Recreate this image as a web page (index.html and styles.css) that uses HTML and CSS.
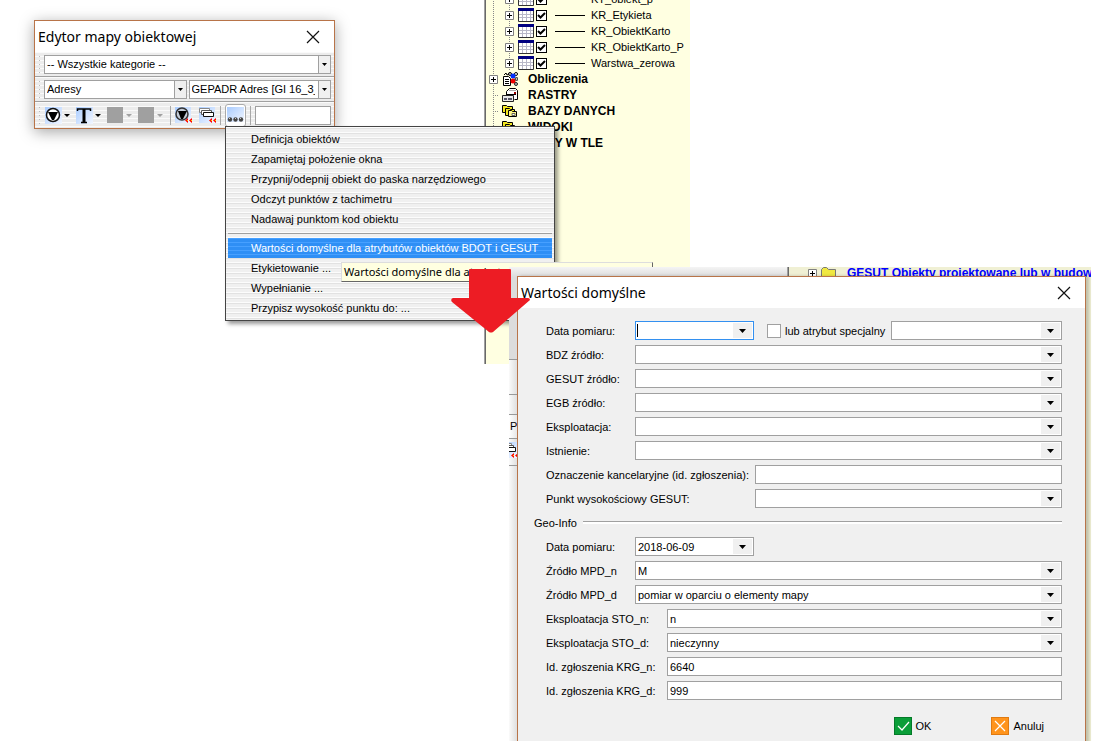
FILE: index.html
```html
<!DOCTYPE html>
<html lang="pl">
<head>
<meta charset="utf-8">
<title>Edytor mapy obiektowej</title>
<link rel="stylesheet" href="styles.css">
</head>
<body>
<svg class="defs" aria-hidden="true">
  <defs>
    <linearGradient id="sky" x1="0" y1="0" x2="1" y2="1"><stop offset="0" stop-color="#a9ccff"/><stop offset="1" stop-color="#f2f6ff"/></linearGradient>
    <symbol id="plus" viewBox="0 0 9 9"><path d="M.5.5h8v8h-8z" fill="#fff" stroke="#808080"/><path d="M2 4.500h5M4.500 2v5" stroke="#000"/></symbol>
    <symbol id="table" viewBox="0 0 16 14"><path d="M.5.5h15v13H.5z" fill="#fff" stroke="#333"/><path d="M0 0h16v3H0z" fill="#000080"/><path d="M1 6.500h14M1 9.500h14M4.500 3v10M8.500 3v10M12.500 3v10" stroke="#b8b8c8"/></symbol>
    <symbol id="calc" viewBox="0 0 16 16"><path d="M1.500 5.500h5l2 2v7h-7z" fill="#fff" stroke="#000"/><path d="M3 8.500h4M3 10.500h4M3 12.500h4" stroke="#000"/><path d="M2 4l2-2 1 2 2-1" stroke="#000" fill="none"/><circle cx="8" cy="3" r="1.500" fill="#ccc" stroke="#000"/><circle cx="14" cy="3" r="1.500" fill="#fff" stroke="#000"/><circle cx="11" cy="5" r="2.500" fill="#0030ff"/><circle cx="11" cy="10" r="2.500" fill="#f00000"/><circle cx="14.500" cy="8" r="1.500" fill="#bbb" stroke="#222"/><circle cx="14" cy="13" r="1.500" fill="#bbb" stroke="#222"/></symbol>
    <symbol id="print" viewBox="0 0 16 16"><path d="M4.500 7.500v-3l3-3h6l2 2v9h-3" fill="#fff" stroke="#000"/><path d="M7 3.500h7" stroke="#aaa"/><path d="M4 7.500h10" stroke="#000"/><path d="M12 5h2v2h-2z" fill="#900"/><path d="M.5 8.500h11v6H.5z" fill="#e8e8e8" stroke="#222"/><path d="M2 11h3v2H2zM6 11h4v2H6z" fill="#556"/></symbol>
    <symbol id="layers" viewBox="0 0 16 14"><g fill="#f4e820" stroke="#000"><path d="M.5 1.500h4l1 1h5v6H.5z"/><path d="M3.500 4.500h4l1 1h4v6h-9z"/><path d="M6.500 6.500h3l1 1h4v5h-8z" fill="#fff88a"/></g><path d="M10 9.500h3v2h-3z" fill="#fff" stroke="#665"/></symbol>
    <symbol id="folder" viewBox="0 0 15 12"><path d="M.5 2.500l2-2h3l2 2h7v9H.5z" fill="#f0e840" stroke="#777"/></symbol>
    <symbol id="close" viewBox="0 0 14 14"><path d="M1 1l12 12M13 1L1 13" stroke="#111" fill="none" stroke-width="1.200"/></symbol>
    <symbol id="obj" viewBox="0 0 17 17"><path d="M0 0h17v17H0z" fill="url(#sky)"/><circle cx="8" cy="8" r="6.500" fill="#fff" stroke="#111" stroke-width="1.500"/><path d="M3 5h10l-4 8H7z" fill="#000"/></symbol>
    <symbol id="text" viewBox="0 0 17 17"><path d="M0 0h17v17H0z" fill="url(#sky)"/><path d="M1.500 4V2h13v2M5 15.500h6" stroke="#000" stroke-width="1.500" fill="none"/><path d="M8 2v13" stroke="#000" stroke-width="3"/></symbol>
    <symbol id="off" viewBox="0 0 17 17"><path d="M0 0h16v16H0z" fill="#a0a0a0"/></symbol>
    <symbol id="back" viewBox="0 0 7 5"><path d="M3 0v5L0 2.500zM7 0v5L4 2.500z" fill="#f00"/><path d="M2 2h1v1H2zM6 2h1v1H6z" fill="#ffd000"/></symbol>
    <symbol id="objback" viewBox="0 0 17 17"><path d="M0 0h16v16H0z" fill="url(#sky)"/><circle cx="7" cy="7" r="6" fill="#c4ccd8" stroke="#333" stroke-width="1.500"/><path d="M3 4h9l-4 8H6z" fill="#000"/><use href="#back" x="10" y="11" width="7" height="5"/></symbol>
    <symbol id="winback" viewBox="0 0 17 17"><path d="M0 0h16v16H0z" fill="url(#sky)"/><g fill="#fff"><path d="M.5 1.500h10v4H.5z" stroke="#888"/><path d="M2.500 3.500h10v4h-10z" stroke="#555"/><path d="M4.500 5.500h10v4h-10z" stroke="#111"/></g><use href="#back" x="10" y="11" width="7" height="5"/></symbol>
    <symbol id="dots" viewBox="0 0 17 17"><path d="M0 0h17v15H0z" fill="url(#sky)"/><g fill="#444"><circle cx="3" cy="12.500" r="2.200"/><circle cx="8.500" cy="12.500" r="2.200"/><circle cx="14" cy="12.500" r="2.200"/></g><path d="M2 11h1v1H2zM8 11h1v1H8zM13 11h1v1h-1z" fill="#ccc"/></symbol>
  </defs>
</svg>

<main class="desktop">
  <section class="tree tree-main" aria-label="Warstwy">
    <ul class="tree-list">
      <li class="leaf"><svg class="plus"><use href="#plus"/></svg><svg class="tbl"><use href="#table"/></svg><label><input type="checkbox" checked><i></i>KT_obiekt_p</label></li>
      <li class="leaf"><svg class="plus"><use href="#plus"/></svg><svg class="tbl"><use href="#table"/></svg><label><input type="checkbox" checked><i></i>KR_Etykieta</label></li>
      <li class="leaf"><svg class="plus"><use href="#plus"/></svg><svg class="tbl"><use href="#table"/></svg><label><input type="checkbox" checked><i></i>KR_ObiektKarto</label></li>
      <li class="leaf"><svg class="plus"><use href="#plus"/></svg><svg class="tbl"><use href="#table"/></svg><label><input type="checkbox" checked><i></i>KR_ObiektKarto_P</label></li>
      <li class="leaf"><svg class="plus"><use href="#plus"/></svg><svg class="tbl"><use href="#table"/></svg><label><input type="checkbox" checked><i></i>Warstwa_zerowa</label></li>
      <li class="branch"><svg class="plus"><use href="#plus"/></svg><svg class="ico"><use href="#calc"/></svg>Obliczenia</li>
      <li class="branch"><span class="plus stub"></span><svg class="ico"><use href="#print"/></svg>RASTRY</li>
      <li class="branch"><span class="plus stub"></span><svg class="ico"><use href="#layers"/></svg>BAZY DANYCH</li>
      <li class="branch"><span class="plus stub"></span><svg class="ico"><use href="#layers"/></svg>WIDOKI</li>
      <li class="branch"><span class="plus stub"></span><svg class="ico"><use href="#layers"/></svg>MAPY W TLE</li>
    </ul>
  </section>

  <section class="window editor" aria-label="Edytor mapy obiektowej">
    <header class="titlebar"><h1>Edytor mapy obiektowej</h1><button class="close" aria-label="Zamknij"><svg><use href="#close"/></svg></button></header>
    <div class="bar"><span class="grip"></span><select class="combo flat grow" aria-label="Kategoria"><option>-- Wszystkie kategorie --</option></select></div>
    <div class="bar"><span class="grip"></span><select class="combo flat grow" aria-label="Grupa"><option>Adresy</option></select><select class="combo flat grow" aria-label="Obiekt"><option>GEPADR Adres [GI 16_3_1]</option></select></div>
    <div class="bar tools"><span class="grip"></span>
      <button class="tool drop" aria-label="Obiekt"><svg><use href="#obj"/></svg></button>
      <button class="tool drop" aria-label="Tekst"><svg><use href="#text"/></svg></button>
      <button class="tool drop" aria-label="Linia" disabled><svg><use href="#off"/></svg></button>
      <button class="tool drop" aria-label="Obszar" disabled><svg><use href="#off"/></svg></button>
      <span class="sep"></span>
      <button class="tool" aria-label="Poprzedni obiekt"><svg><use href="#objback"/></svg></button>
      <button class="tool" aria-label="Poprzednie okno"><svg><use href="#winback"/></svg></button>
      <span class="sep"></span>
      <button class="tool more" aria-label="Więcej"><svg><use href="#dots"/></svg></button>
      <span class="sep"></span>
      <input class="field grow" type="text" aria-label="Szukaj">
    </div>
  </section>

  <nav class="menu" aria-label="Więcej">
    <button>Definicja obiektów</button>
    <button>Zapamiętaj położenie okna</button>
    <button>Przypnij/odepnij obiekt do paska narzędziowego</button>
    <button>Odczyt punktów z tachimetru</button>
    <button>Nadawaj punktom kod obiektu</button>
    <hr>
    <button class="active">Wartości domyślne dla atrybutów obiektów BDOT i GESUT</button>
    <button>Etykietowanie ...</button>
    <button>Wypełnianie ...</button>
    <button>Przypisz wysokość punktu do: ...</button>
  </nav>
  <div class="tooltip" role="tooltip">Wartości domyślne dla atrybut</div>

  <div class="backdrop">
    <div class="behind">
      <div class="gap"></div>
      <div class="slot slot-title"></div>
      <div class="slot"></div>
      <div class="slot slot-text">P</div>
      <div class="slot slot-icon"><svg viewBox="8 0 9 17"><use href="#winback" width="17" height="17"/></svg></div>
    </div>
    <div class="tree tree-back">
      <ul class="tree-list"><li class="project"><svg class="plus"><use href="#plus"/></svg><svg class="fold"><use href="#folder"/></svg>GESUT Obiekty projektowane lub w budow</li></ul>
    </div>
  </div>

  <section class="window dialog" aria-label="Wartości domyślne">
    <header class="titlebar"><h2>Wartości domyślne</h2><button class="close" aria-label="Zamknij"><svg><use href="#close"/></svg></button></header>
    <form class="form">
      <div class="row"><label for="d1">Data pomiaru:</label><select id="d1" class="combo date focus"><option></option></select><span class="caret"></span>
        <label class="special"><input type="checkbox">lub atrybut specjalny</label><select class="combo grow" aria-label="Atrybut specjalny"><option></option></select></div>
      <div class="row"><label for="bdz">BDZ źródło:</label><select id="bdz" class="combo grow"><option></option></select></div>
      <div class="row"><label for="ges">GESUT źródło:</label><select id="ges" class="combo grow"><option></option></select></div>
      <div class="row"><label for="egb">EGB źródło:</label><select id="egb" class="combo grow"><option></option></select></div>
      <div class="row"><label for="eks">Eksploatacja:</label><select id="eks" class="combo grow"><option></option></select></div>
      <div class="row"><label for="ist">Istnienie:</label><select id="ist" class="combo grow"><option></option></select></div>
      <div class="row wide"><label for="ozn">Oznaczenie kancelaryjne (id. zgłoszenia):</label><input id="ozn" class="field grow" type="text"></div>
      <div class="row wide"><label for="pkt">Punkt wysokościowy GESUT:</label><select id="pkt" class="combo grow"><option></option></select></div>
      <h3 class="group">Geo-Info</h3>
      <div class="row"><label for="d2">Data pomiaru:</label><select id="d2" class="combo date"><option>2018-06-09</option></select></div>
      <div class="row"><label for="mn">Źródło MPD_n</label><select id="mn" class="combo grow"><option>M</option></select></div>
      <div class="row"><label for="md">Źródło MPD_d</label><select id="md" class="combo grow"><option>pomiar w oparciu o elementy mapy</option></select></div>
      <div class="row mid"><label for="sn">Eksploatacja STO_n:</label><select id="sn" class="combo grow"><option>n</option></select></div>
      <div class="row mid"><label for="sd">Eksploatacja STO_d:</label><select id="sd" class="combo grow"><option>nieczynny</option></select></div>
      <div class="row mid"><label for="kn">Id. zgłoszenia KRG_n:</label><input id="kn" class="field grow" type="text" value="6640"></div>
      <div class="row mid"><label for="kd">Id. zgłoszenia KRG_d:</label><input id="kd" class="field grow" type="text" value="999"></div>
      <footer class="actions">
        <button type="button"><svg viewBox="0 0 18 18"><path d="M0 0h18v18H0z" fill="#047a28"/><path d="M1 1h16v16H1z" fill="#0a9e38"/><path d="M4 9l4 4 7-8" fill="none" stroke="#fff" stroke-width="1.200"/></svg>OK</button>
        <button type="button"><svg viewBox="0 0 18 18"><path d="M0 0h18v18H0z" fill="#e07a10"/><path d="M1 1h16v16H1z" fill="#ff941c"/><path d="M4 4l10 10M14 4L4 14" fill="none" stroke="#fff" stroke-width="1.200"/></svg>Anuluj</button>
      </footer>
    </form>
  </section>

  <svg class="arrow" viewBox="0 0 79 64" aria-hidden="true"><path d="M19 0h22q1 0 1 0h17q1 0 1 1v28h17q2 0 2 2L42 63q-2 1-4 0L1 33q-2-3 1-4h16V1q0-1 1-1z" fill="#ed1c24"/></svg>
</main>
</body>
</html>
```
FILE: styles.css
```css
* { box-sizing: border-box; }

body {
  margin: 0;
  background: #fff;
  color: #000;
  font: 11px/16px "Liberation Sans", Arial, sans-serif;
}

button, input, select { font: inherit; color: inherit; margin: 0; }
button { border: 0; padding: 0; background: none; }
svg { display: block; flex: none; }
.defs { position: absolute; width: 0; height: 0; }
.grow { flex: 1; min-width: 0; }

.desktop { position: relative; min-height: 100vh; overflow: hidden; }

/* Layer tree */
.tree { background: #ffffe1; border-left: 1px solid #a0a0a0; box-shadow: inset 1px 0 #696969; overflow: hidden; }
.tree-main { position: absolute; left: 484px; top: 0; width: 206px; height: 364px; }
.tree-list { list-style: none; margin: -9px 0 0; padding: 0 0 0 4px; }
.tree-list li { display: flex; align-items: center; height: 16px; white-space: nowrap; }
.leaf {
  padding-left: 16px;
  background:
    repeating-linear-gradient(#888 0 1px, transparent 1px 2px) 4px 0 / 1px 100% no-repeat,
    repeating-linear-gradient(#888 0 1px, transparent 1px 2px) 20px 0 / 1px 100% no-repeat;
}
.branch {
  font-size: 12px;
  font-weight: bold;
  background: repeating-linear-gradient(#888 0 1px, transparent 1px 2px) 4px 0 / 1px 100% no-repeat;
}
.plus { width: 9px; height: 9px; }
.stub { background: repeating-linear-gradient(90deg, #888 0 1px, transparent 1px 2px) 4px 4px / 100% 1px no-repeat; }
.tbl { width: 16px; height: 14px; margin: 0 2px 0 4px; }
.ico { width: 16px; height: 16px; margin: 0 10px 0 4px; }
.leaf label { display: flex; align-items: center; }
.leaf input {
  appearance: none;
  width: 11px;
  height: 11px;
  border: 1px solid #000;
  background: #fff url("data:image/svg+xml,%3Csvg xmlns='http://www.w3.org/2000/svg' viewBox='0 0 9 9'%3E%3Cpath d='M1 4l2.500 2.500L8 2' fill='none' stroke='%23000' stroke-width='2'/%3E%3C/svg%3E");
}
.leaf i { width: 30px; height: 1px; margin: 0 6px 0 8px; background: #000; }

/* Windows */
.window { position: absolute; border: 1px solid #b87449; background: #f0f0f0; }
.titlebar { display: flex; align-items: center; justify-content: space-between; height: 31px; padding: 0 14px 0 3px; background: #fff; }
.titlebar h1, .titlebar h2 { margin: 0; font: 14px/20px "Noto Sans", "Open Sans", sans-serif; }
.close svg { width: 14px; height: 14px; }

.editor { left: 34px; top: 20px; width: 301px; box-shadow: 0 3px 14px rgba(0, 0, 0, .35); }
.bar {
  display: flex;
  align-items: center;
  gap: 2px;
  height: 25px;
  padding: 0 3px 0 4px;
  border-bottom: 1px solid #a0a0a0;
  background: repeating-linear-gradient(#fafafa 0 1px, #ececec 1px 4px);
}
.bar:last-child { height: 26px; border-bottom: 0; }
.grip { flex: none; width: 3px; height: 17px; background: repeating-linear-gradient(#bbb 0 1px, transparent 1px 4px) 0 0 / 1px 100% no-repeat; }
.tools { gap: 3px; }
.tool { display: flex; align-items: center; }
.tool svg { width: 17px; height: 17px; }
.tool.drop { gap: 2px; margin-right: 3px; }
.drop::after { content: ""; border: 3px solid transparent; border-top-color: #000; border-bottom: 0; }
.drop:disabled::after { border-top-color: #a0a0a0; }
.tool + .tool:not(.drop) { margin-left: 4px; }
.more { padding: 2px 1px; border: 1px solid #aaa; border-radius: 3px; background: #fff; }
.sep { width: 1px; height: 19px; margin: 0 1px; background: #a8a8a8; }

/* Controls */
.combo, .field {
  height: 19px;
  padding: 0 2px;
  border: 1px solid #a0a0a0;
  border-radius: 0;
  background-color: #fff;
  outline: 0;
}
.combo {
  appearance: none;
  padding-right: 22px;
  overflow: hidden;
  background-image: url("data:image/svg+xml,%3Csvg xmlns='http://www.w3.org/2000/svg' width='19' height='15'%3E%3Cpath d='M0 0h19v15H0z' fill='%23f0f0f0'/%3E%3Cpath d='M6 6h7l-3.500 4z'/%3E%3C/svg%3E");
  background-repeat: no-repeat;
  background-position: right 1px center;
}
.combo.flat {
  padding-right: 15px;
  background-image: url("data:image/svg+xml,%3Csvg xmlns='http://www.w3.org/2000/svg' width='12' height='17'%3E%3Cpath d='M0 0h12v17H0z' fill='%23f0f0f0'/%3E%3Cpath d='M.5 0v17' stroke='%23a0a0a0'/%3E%3Cpath d='M4 7h5l-2.500 3z'/%3E%3C/svg%3E");
  background-position: right center;
}
.combo.focus { border-color: #3390f0; }
.date { width: 119px; }

/* Popup menu */
.menu {
  position: absolute;
  left: 225px;
  top: 126px;
  width: 330px;
  padding: 2px;
  border: 1px solid #444;
  background: repeating-linear-gradient(#fcfcfc 0 1px, #e2e2e2 1px 2px, #f0f0f0 2px 5px);
  box-shadow: 3px 3px 4px rgba(0, 0, 0, .4);
}
.menu button { display: block; width: 100%; height: 20px; padding: 0 0 0 23px; text-align: left; white-space: nowrap; }
.menu hr { height: 1px; margin: 4px 0; border: 0; background: #a0a0a0; }
.menu .active { color: #fff; background: repeating-linear-gradient(#47a0ff 0 1px, #2f8ff5 1px 4px); }

.tooltip {
  position: absolute;
  left: 341px;
  top: 262px;
  width: 312px;
  height: 20px;
  padding: 0 2px;
  overflow: hidden;
  border: 1px solid #666;
  border-top-color: #ddd;
  border-left-color: #ddd;
  background: #ffffe1;
  font: 11px/18px "Noto Sans", "Open Sans", sans-serif;
  white-space: nowrap;
}

/* Windows lying under the dialog */
.backdrop { position: absolute; left: 509px; top: 267px; bottom: 0; width: 582px; display: flex; background: #fff; }
.behind { width: 278px; background: linear-gradient(90deg, #fafafa, #dcdcdc 9px); }
.gap { height: 92px; background: linear-gradient(#f4f4f4, #dcdcdc 10px); }
.slot { height: 24px; padding: 3px 0; border-top: 1px solid #999; }
.slot-title { height: 35px; }
.slot-title + .slot { height: 20px; }
.slot-text { padding-left: 1px; background: linear-gradient(90deg, #fff, #e4e4e4 9px); }
.slot-icon { height: 28px; border-bottom: 1px solid #999; }
.slot-icon svg { width: 9px; height: 17px; }
.tree-back { flex: 1; background: #f0f0d4; }
.tree-back .tree-list { margin: -2px 0 0; padding-left: 20px; }
.project { color: #00f; font-weight: bold; font-size: 12px; }
.fold { width: 15px; height: 12px; margin: 0 11px 0 4px; }

/* Dialog */
.dialog { left: 517px; top: 276px; width: 569px; box-shadow: 3px 0 3px rgba(0, 0, 0, .2); }
.form { display: flex; flex-direction: column; gap: 5px; padding: 13px 23px 13px 28px; }
.row { display: flex; align-items: center; height: 19px; position: relative; }
.row > label:first-child { width: 89px; flex: none; white-space: nowrap; }
.row.mid > label:first-child { width: 121px; }
.row.wide > label:first-child { width: 209px; }
.caret { position: absolute; left: 91px; top: 3px; width: 1px; height: 13px; background: #000; }
.special { display: flex; align-items: center; gap: 4px; width: 120px; margin: 0 4px 0 13px; white-space: nowrap; }
.special input { appearance: none; flex: none; width: 14px; height: 14px; border: 1px solid #a0a0a0; background: #fff; }
.group { display: flex; align-items: center; gap: 6px; height: 19px; margin: 0 0 0 -12px; font: inherit; }
.group::after { content: ""; flex: 1; height: 2px; border-top: 1px solid #a0a0a0; background: #fff; }
.actions { display: flex; justify-content: flex-end; gap: 60px; margin-top: 12px; padding-right: 18px; }
.actions button { display: flex; align-items: center; gap: 4px; }
.actions svg { width: 18px; height: 18px; }

.arrow { position: absolute; left: 451px; top: 269px; width: 79px; height: 64px; }
```
